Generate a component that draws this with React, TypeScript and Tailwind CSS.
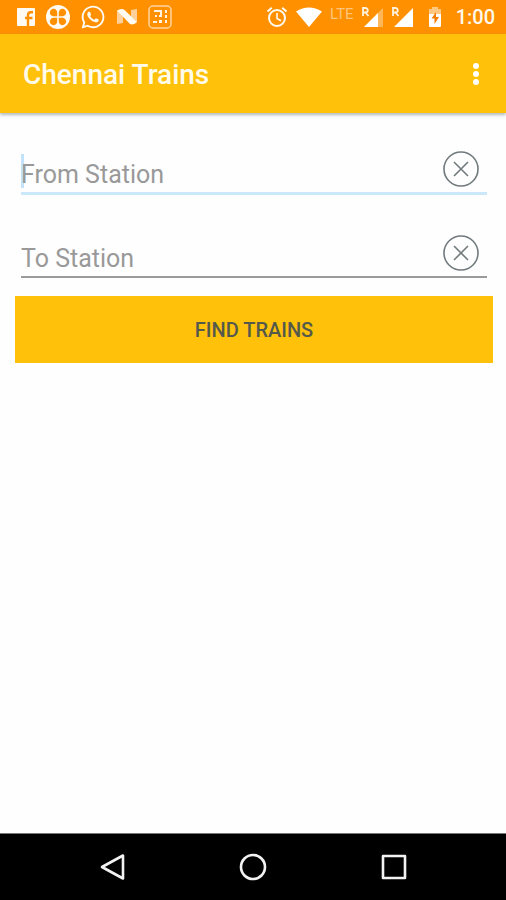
import { useState } from "react";
import { FaWhatsapp } from "react-icons/fa";

function FacebookIcon() {
  return (
    <svg width="20" height="20" viewBox="0 0 20 20">
      <rect x="1" y="1" width="18" height="18" rx="1" fill="#fffaf2" />
      <path d="M12 19V8.200Q12 5.200 14.800 5.200H17M9 11h7.500" fill="none" stroke="#ff9100" strokeWidth="2.400" />
    </svg>
  );
}

function CloverIcon() {
  return (
    <svg width="24" height="24" viewBox="0 0 24 24">
      <circle cx="12" cy="12" r="12" fill="#fffaf2" />
      <g fill="#ff9100">
        <path d="M11.200 11.200H8A3.700 3.700 0 1 1 11.200 8z" />
        <path d="M12.800 11.200H16A3.700 3.700 0 1 0 12.800 8z" />
        <path d="M11.200 12.800H8A3.700 3.700 0 1 0 11.200 16z" />
        <path d="M12.800 12.800H16A3.700 3.700 0 1 1 12.800 16z" />
      </g>
    </svg>
  );
}

function NougatIcon() {
  return (
    <svg width="22" height="20" viewBox="0 0 22 20">
      <path d="M1 4l6-2v14l-6 1z" fill="#ffd09a" />
      <path d="M15 3l6-1v13l-6 2z" fill="#ffd09a" />
      <path d="M1 3.500Q4.500 1 8 2.500L21 15q-3 3.500-7 2z" fill="#fffaf2" />
    </svg>
  );
}

function CalculatorIcon() {
  return (
    <svg width="24" height="24" viewBox="0 0 24 24">
      <rect x="1" y="1" width="22" height="22" rx="4" fill="none" stroke="#ffd5a0" strokeWidth="1.500" />
      <g fill="#fff3e0">
        <rect x="6" y="5" width="8" height="2" />
        <rect x="12" y="5" width="2" height="5" />
        <rect x="17" y="5" width="2" height="3" />
        <rect x="7" y="10" width="2" height="2" />
        <rect x="11" y="10" width="3" height="2" />
        <rect x="17" y="10" width="2" height="3" />
        <rect x="5" y="16" width="4" height="2" />
        <rect x="11" y="15" width="3" height="3" />
        <rect x="17" y="15" width="2" height="3" />
      </g>
    </svg>
  );
}

function AlarmIcon() {
  return (
    <svg width="22" height="22" viewBox="0 0 22 22" fill="none" stroke="#fffaf2" strokeWidth="2">
      <circle cx="11" cy="12" r="8" />
      <path d="M11 7v5.500l4 2.300" strokeWidth="1.600" />
      <path d="M1.500 5.500l4.300-3.700M20.500 5.500l-4.300-3.700" />
    </svg>
  );
}

function WifiIcon() {
  return (
    <svg width="26" height="20" viewBox="0 0 26 20">
      <path d="M0 4.500Q13-3.500 26 4.500L13 20z" fill="#fff" />
    </svg>
  );
}

function SignalIcon({ full }: { full: boolean }) {
  return (
    <svg width="22" height="22" viewBox="0 0 22 22">
      <path d="M21 2v19H2z" fill="#fff" fillOpacity={full ? 1 : 0.35} />
      {!full && <path d="M16 7v14H2z" fill="#fff" />}
      <path d="M1 10V2h2.500a2 2 0 0 1 0 4.500H1M3.500 6.500l3 3.500" fill="none" stroke="#fff3e0" strokeWidth="1.800" />
    </svg>
  );
}

function BatteryIcon() {
  return (
    <svg width="14" height="20" viewBox="0 0 14 20">
      <path d="M4 2V0h6v2h3v6H1V2z" fill="#ffc780" />
      <path d="M1 7h12v12a1 1 0 0 1-1 1H2a1 1 0 0 1-1-1z" fill="#fff" />
      <path d="M8 5l-4.500 6.500h3V17l4.500-7H8z" fill="#f57c00" />
    </svg>
  );
}

function StatusBar() {
  return (
    <div className="flex h-[34px] items-center justify-between bg-[#ff9100] pl-4 pr-[11px]">
      <div className="flex items-center gap-2.5">
        <FacebookIcon />
        <CloverIcon />
        <FaWhatsapp size={26} color="#fffaf2" />
        <NougatIcon />
        <CalculatorIcon />
      </div>
      <div className="flex items-center gap-2">
        <AlarmIcon />
        <WifiIcon />
        <span className="h-[22px] text-[15px] leading-4 text-[#ffc47c]">LTE</span>
        <SignalIcon full={false} />
        <SignalIcon full />
        <span className="px-1.5">
          <BatteryIcon />
        </span>
        <span className="text-xl font-medium leading-6 text-[#fff8ec]">1:00</span>
      </div>
    </div>
  );
}

type StationFieldProps = {
  id: string;
  label: string;
  active: boolean;
  value: string;
  onChange: (value: string) => void;
};

function StationField({ id, label, active, value, onChange }: StationFieldProps) {
  return (
    <div
      className={
        active
          ? "relative mx-1.5 flex items-end border-b-[3px] border-[#cbe7fa]"
          : "relative mx-1.5 flex items-end border-b-2 border-[#9a9a9a]"
      }
    >
      {active && value === "" && <span className="absolute bottom-1 left-0 h-[34px] w-[3px] bg-[#c2e3fa]" />}
      <input
        id={id}
        type="text"
        aria-label={label}
        placeholder={label}
        value={value}
        onChange={(event) => onChange(event.target.value)}
        className="relative h-10 min-w-0 flex-1 bg-transparent pt-1 text-[25px] leading-8 text-[#424242] outline-none placeholder:text-[#999999]"
      />
      <button type="button" aria-label={`Clear ${label}`} onClick={() => onChange("")} className="mr-2 h-[46px]">
        <svg width="36" height="36" viewBox="0 0 36 36" fill="none" stroke="#717a7d" strokeWidth="1.600">
          <circle cx="18" cy="18" r="17" />
          <path d="M11 11l14 14M25 11L11 25" />
        </svg>
      </button>
    </div>
  );
}

export default function App() {
  const [from, setFrom] = useState("");
  const [to, setTo] = useState("");

  return (
    <div className="flex min-h-screen flex-col bg-[#fefefe] font-[Roboto,sans-serif]">
      <StatusBar />
      <header className="flex h-[79px] items-center justify-between bg-[#ffc10a] pl-[23px] pr-5 shadow-[0_2px_3px_rgba(60,80,90,0.4)]">
        <h1 className="pt-0.5 text-[28px] font-medium leading-8 text-[#fffbea]">Chennai Trains</h1>
        <button type="button" aria-label="More options" className="flex w-5 flex-col items-center gap-0.5">
          <span className="size-1.5 rounded-full bg-white" />
          <span className="size-1.5 rounded-full bg-white" />
          <span className="size-1.5 rounded-full bg-white" />
        </button>
      </header>
      <main className="flex-1 pl-[15px] pr-[13px] pt-[33px]">
        <form onSubmit={(event) => event.preventDefault()} className="flex flex-col gap-[18px]">
          <div className="flex flex-col gap-[35px]">
            <StationField id="from" label="From Station" active value={from} onChange={setFrom} />
            <StationField id="to" label="To Station" active={false} value={to} onChange={setTo} />
          </div>
          <button type="submit" className="h-[67px] bg-[#ffc10a] text-xl font-medium leading-6 text-[#54594c]">
            FIND TRAINS
          </button>
        </form>
      </main>
      <nav className="flex h-[67px] items-center justify-center gap-[113px] border-t border-[#777777] bg-black">
        <button type="button" aria-label="Back">
          <svg width="28" height="28" viewBox="0 0 28 28" fill="none" stroke="#f2f2f2" strokeWidth="2.600" strokeLinejoin="round">
            <path d="M25 2.500v23L4 14z" />
          </svg>
        </button>
        <button type="button" aria-label="Home">
          <svg width="28" height="28" viewBox="0 0 28 28" fill="none" stroke="#f2f2f2" strokeWidth="2.600">
            <circle cx="14" cy="14" r="12" />
          </svg>
        </button>
        <button type="button" aria-label="Recent apps">
          <svg width="28" height="28" viewBox="0 0 28 28" fill="none" stroke="#f2f2f2" strokeWidth="2.600" strokeLinejoin="round">
            <path d="M3 3h22v22H3z" />
          </svg>
        </button>
      </nav>
    </div>
  );
}
